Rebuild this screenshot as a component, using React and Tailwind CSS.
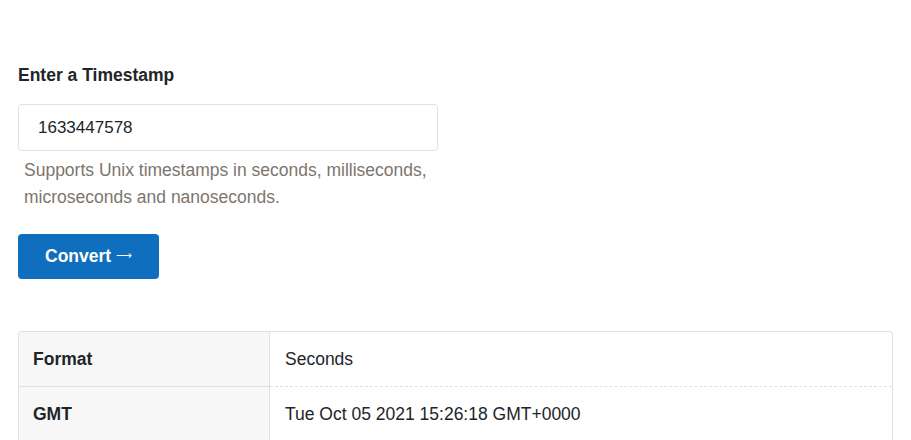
import React from 'react';

const rows = [
  { label: 'Format', value: 'Seconds' },
  { label: 'GMT', value: 'Tue Oct 05 2021 15:26:18 GMT+0000' },
];

const App = () => {
  return (
    <div className="min-h-screen bg-white px-[18px] pt-[63px] font-['Liberation_Sans',Arial,sans-serif] text-[17.5px] text-[#212529]">
      <div className="w-[420px]">
        <label className="block font-bold leading-[24px]">Enter a Timestamp</label>
        <input
          type="text"
          defaultValue="1633447578"
          className="mt-[17px] h-[47px] w-full rounded border border-[#dee2e6] px-[19px] text-[17px] text-[#212529] outline-none"
        />
        <p className="mt-[6px] pl-[6px] leading-[27px] text-[#7d756d]">
          Supports Unix timestamps in seconds, milliseconds, microseconds and nanoseconds.
        </p>
        <button className="mt-[23px] flex h-[45px] w-[141px] items-center justify-center gap-[5px] rounded bg-[#0f6fbe] font-bold text-white">
          Convert
          <span className="font-['DejaVu_Sans',sans-serif] text-[11px] font-normal">⟶</span>
        </button>
      </div>

      <div className="mt-[52px] overflow-hidden rounded-t border border-b-0 border-[#dee2e6]">
        {rows.map((row, i) => (
          <div key={row.label} className="flex">
            <div
              className={`flex w-[251px] items-center border-r border-[#dee2e6] bg-[#f7f7f7] pl-[14px] font-bold ${
                i > 0 ? 'h-[55px] border-t' : 'h-[54px]'
              }`}
            >
              {row.label}
            </div>
            <div
              className={`flex flex-1 items-center pl-[15px] ${
                i > 0 ? 'h-[55px] border-t border-dashed border-[#dee2e6]' : 'h-[54px]'
              }`}
            >
              {row.value}
            </div>
          </div>
        ))}
      </div>
    </div>
  );
};

export default App;
